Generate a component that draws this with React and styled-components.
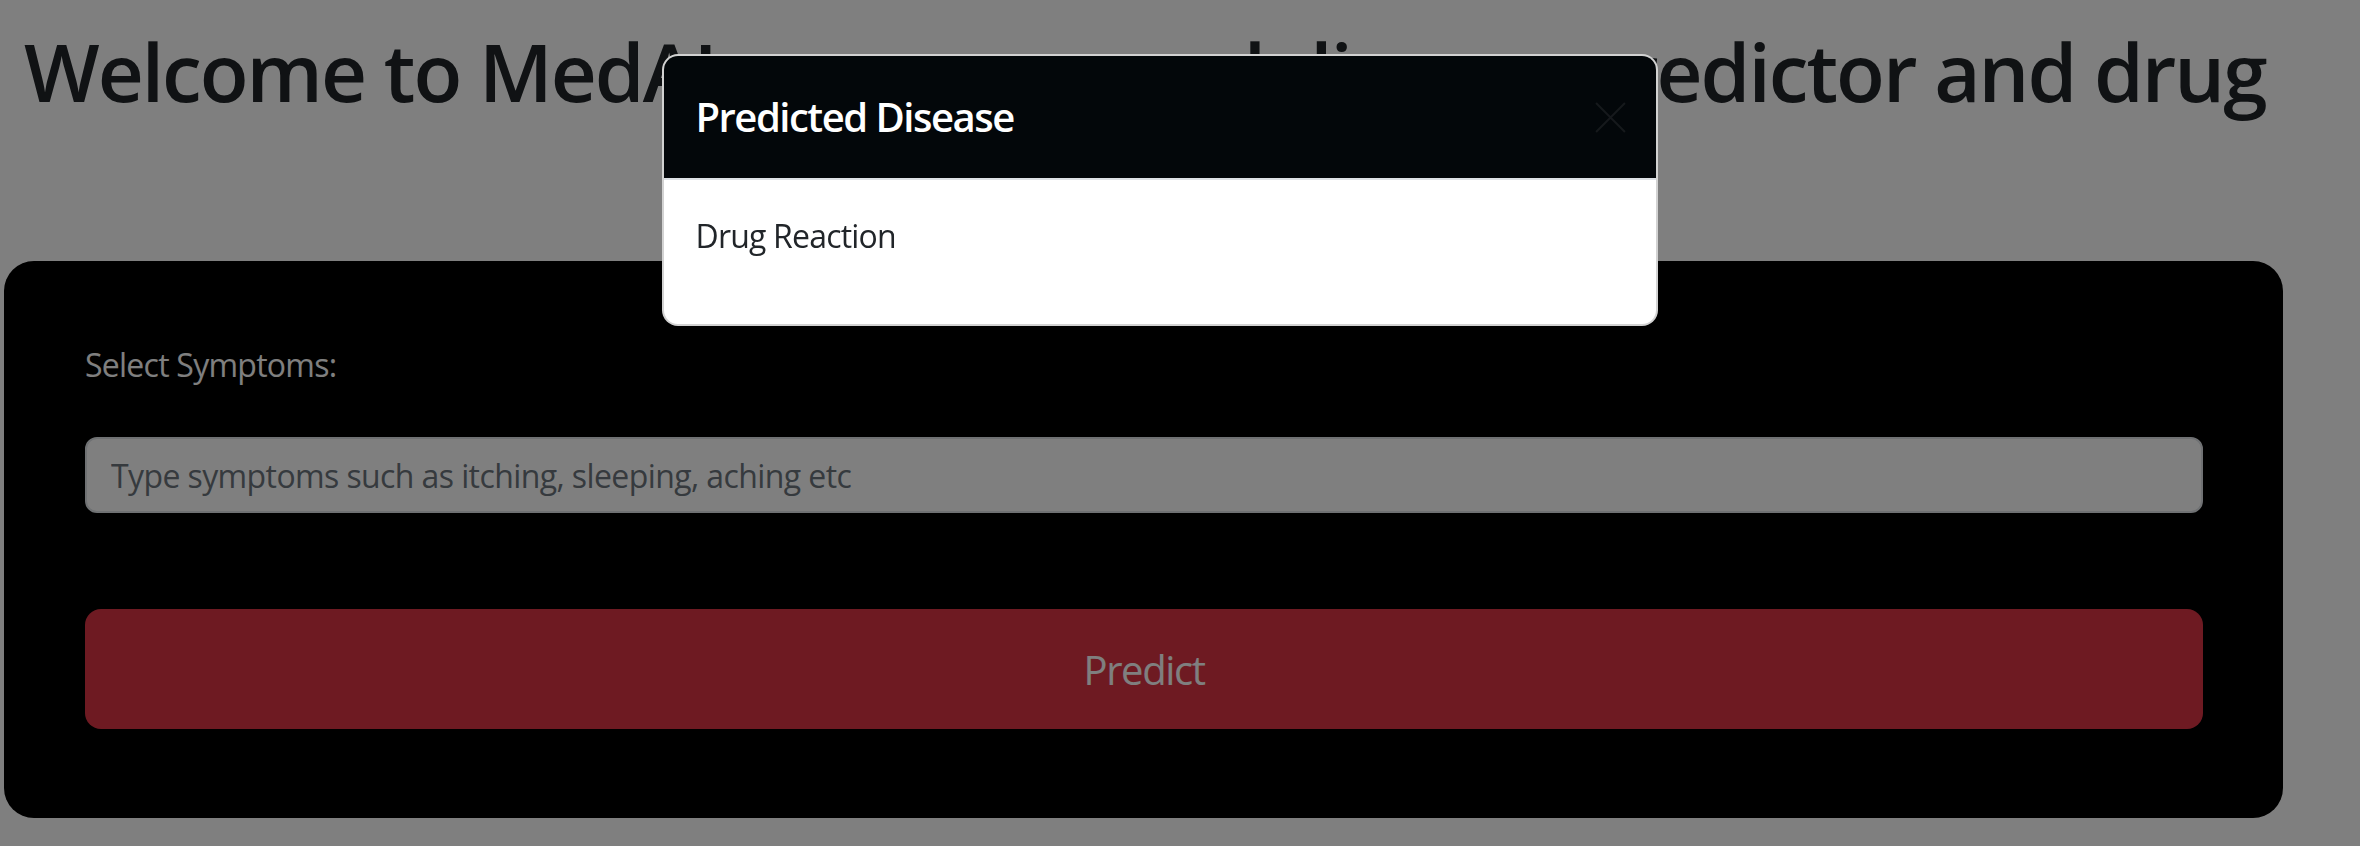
import styled, { createGlobalStyle } from "styled-components";

const GlobalStyle = createGlobalStyle`
  body {
    margin: 0;
    background: #fff;
    font-family: "Open Sans", "Noto Sans", sans-serif;
    color: #212529;
  }
`;

export default function App() {
  return (
    <>
      <GlobalStyle />
      <Page>
        <Title>Welcome to MedAI, your personal disease predictor and drug</Title>
        <Card>
          <Label htmlFor="symptoms">Select Symptoms:</Label>
          <Input id="symptoms" placeholder="Type symptoms such as itching, sleeping, aching etc" />
          <PredictButton>Predict</PredictButton>
        </Card>
      </Page>
      <Backdrop />
      <ModalLayer>
        <Modal>
          <ModalHeader>
            <ModalTitle>Predicted Disease</ModalTitle>
            <CloseButton aria-label="Close">
              <svg width="33" height="33" viewBox="0 0 16 16">
                <path d="M1 1 15 15M15 1 1 15" stroke="#16191c" strokeWidth="1" fill="none" />
              </svg>
            </CloseButton>
          </ModalHeader>
          <ModalBody>
            <p>Drug Reaction</p>
          </ModalBody>
        </Modal>
      </ModalLayer>
    </>
  );
}

const Page = styled.div`
  padding-top: 23px;
`;

const Title = styled.h1`
  margin: 0 0 142px;
  padding-left: 24px;
  font-size: 80px;
  font-weight: 600;
  letter-spacing: -2px;
  line-height: 1.2;
  white-space: nowrap;
  color: #212529;
`;

const Card = styled.form`
  width: 2279px;
  margin-left: 4px;
  box-sizing: border-box;
  padding: 80px 80px 89px 81px;
  background: #000;
  border-radius: 30px;
  display: flex;
  flex-direction: column;
`;

const Label = styled.label`
  font-size: 32px;
  line-height: 48px;
  letter-spacing: -0.75px;
  color: #fff;
  margin-bottom: 48px;
`;

const Input = styled.input`
  height: 76px;
  box-sizing: border-box;
  padding: 0 24px;
  border: 2px solid #dee2e6;
  border-radius: 12px;
  background: #fff;
  font-family: inherit;
  font-size: 32px;
  letter-spacing: -0.6px;
  color: #212529;
  margin-bottom: 96px;

  &::placeholder {
    color: #6c757d;
  }
`;

const PredictButton = styled.button`
  height: 120px;
  border: none;
  border-radius: 16px;
  background: #dc3545;
  color: #fff;
  font-family: inherit;
  font-size: 40px;
  letter-spacing: -1.4px;
`;

const Backdrop = styled.div`
  position: fixed;
  inset: 0;
  background: rgba(0, 0, 0, 0.5);
`;

const ModalLayer = styled.div`
  position: fixed;
  inset: 0;
  display: flex;
  justify-content: center;
  align-items: flex-start;
  padding: 54px 41px 0 0;
`;

const Modal = styled.div`
  width: 996px;
  box-sizing: border-box;
  background: #fff;
  border: 2px solid rgba(0, 0, 0, 0.175);
  border-radius: 16px;
  overflow: hidden;
`;

const ModalHeader = styled.div`
  display: flex;
  align-items: center;
  justify-content: space-between;
  padding: 31px 29px 31px 32px;
  background: #03070a;
  border-bottom: 2px solid #dee2e6;
`;

const ModalTitle = styled.h5`
  margin: 0;
  font-size: 40px;
  line-height: 60px;
  font-weight: 600;
  letter-spacing: -1.5px;
  color: #fff;
`;

const CloseButton = styled.button`
  display: flex;
  padding: 0;
  border: none;
  background: transparent;
`;

const ModalBody = styled.div`
  padding: 32px;

  p {
    margin: 0 0 32px;
    font-size: 32px;
    line-height: 48px;
    letter-spacing: -0.8px;
    color: #212529;
  }
`;
